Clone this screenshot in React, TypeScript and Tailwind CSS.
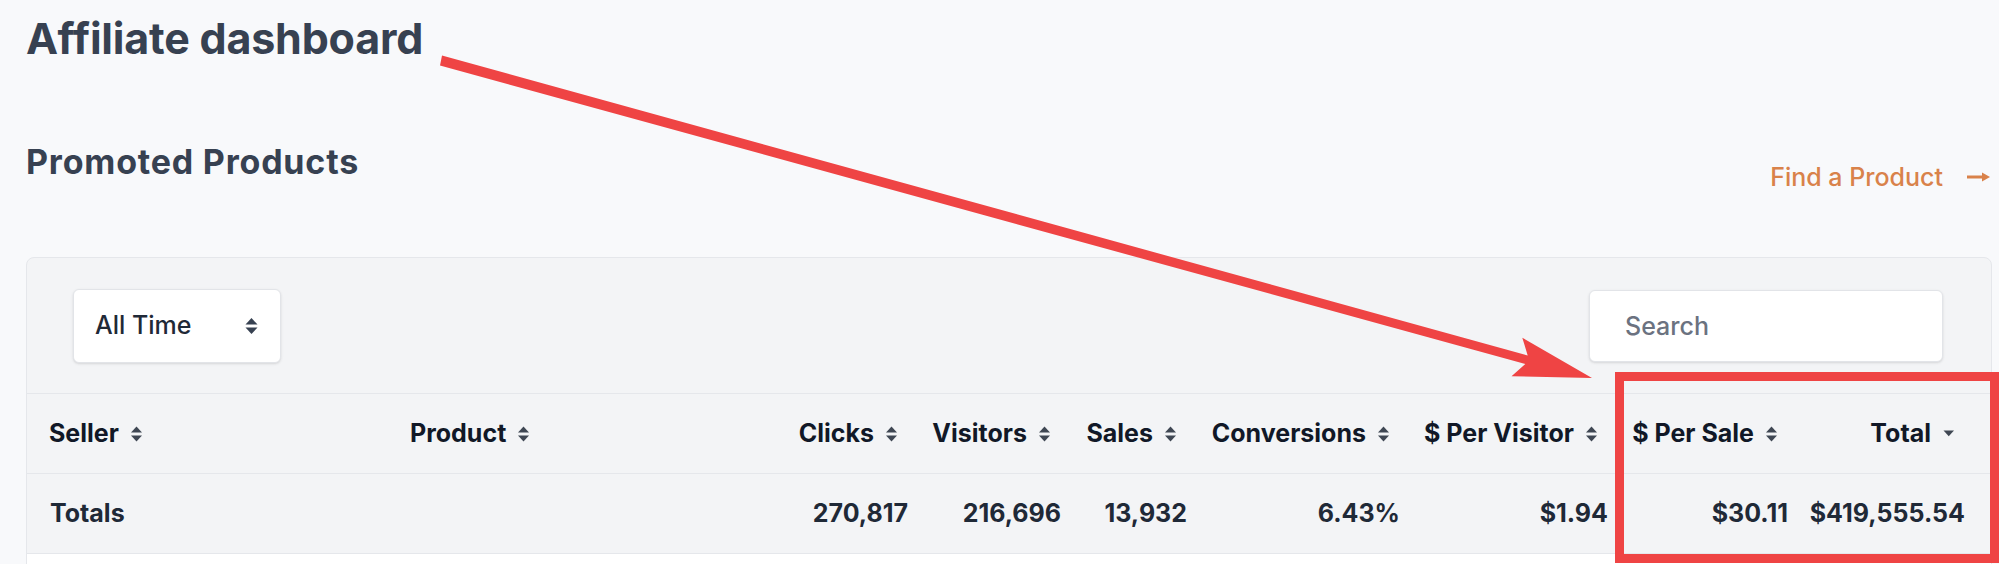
import React from "react";

const SortIcon = () => (
  <svg width="13" height="16" viewBox="0 0 13 16" className="shrink-0">
    <polygon points="1,6.6 6.5,0.6 12,6.6" fill="#3f4753" />
    <polygon points="1,9.4 6.5,15.4 12,9.4" fill="#3f4753" />
  </svg>
);

const CaretDown = () => (
  <svg width="13" height="7" viewBox="0 0 13 7" className="shrink-0">
    <polygon points="1.5,0.5 12,0.5 6.75,6.2" fill="#3f4753" />
  </svg>
);

const SelectIcon = () => (
  <svg width="15" height="18" viewBox="0 0 15 18" className="shrink-0">
    <polygon points="1.5,7.5 7.5,1 13.5,7.5" fill="#374151" />
    <polygon points="1.5,10.5 7.5,17 13.5,10.5" fill="#374151" />
  </svg>
);

const headers: { label: string; align: "left" | "right"; icon: "sort" | "caret" }[] = [
  { label: "Seller", align: "left", icon: "sort" },
  { label: "Product", align: "left", icon: "sort" },
  { label: "Clicks", align: "right", icon: "sort" },
  { label: "Visitors", align: "right", icon: "sort" },
  { label: "Sales", align: "right", icon: "sort" },
  { label: "Conversions", align: "right", icon: "sort" },
  { label: "$ Per Visitor", align: "right", icon: "sort" },
  { label: "$ Per Sale", align: "right", icon: "sort" },
  { label: "Total", align: "right", icon: "caret" },
];

const totals = ["Totals", "", "270,817", "216,696", "13,932", "6.43%", "$1.94", "$30.11", "$419,555.54"];

export default function App() {
  return (
    <div className="relative w-[1999px] h-[564px] overflow-hidden bg-[#f8f9fb] font-['Inter',sans-serif]">
      <div className="pl-[26px] pt-[12px]">
        <h1 className="text-[43px] leading-[53px] font-bold text-[#374151] tracking-[-0.2px]">
          Affiliate dashboard
        </h1>

        <div className="mt-[75px] flex h-[52px] w-[1966px] items-start justify-between pr-[2px]">
          <h2 className="text-[34px] leading-[44px] font-bold tracking-[0.8px] text-[#374151]">Promoted Products</h2>
          <a className="mt-[22px] flex items-center gap-[24px] text-[25px] leading-[30px] font-medium text-[#d9824a]">
            <span>Find a Product</span>
            <svg width="23" height="10" viewBox="0 0 23 10">
              <line x1="0" y1="5" x2="18" y2="5" stroke="#d9824a" strokeWidth="3" />
              <polygon points="15,0.5 23,5 15,9.5" fill="#d9824a" />
            </svg>
          </a>
        </div>

        <div className="mt-[65px] w-[1966px] h-[400px] rounded-lg border border-[#e5e7eb] bg-[#f3f4f6] overflow-hidden">
          <div className="flex h-[136px] items-center justify-between border-b border-[#e5e7eb] pl-[46px] pr-[48px] pt-[1px]">
            <div className="flex h-[74px] w-[208px] items-center justify-between rounded-md border border-[#e2e4e8] bg-white pl-[21px] pr-[21px] shadow-sm">
              <span className="text-[25px] font-medium text-[#1f2937]">All Time</span>
              <SelectIcon />
            </div>
            <input
              placeholder="Search"
              className="h-[72px] w-[354px] rounded-md border border-[#e2e4e8] bg-white pl-[35px] text-[25px] font-medium text-[#1f2937] shadow-sm outline-none placeholder:text-[#6b7280]"
            />
          </div>

          <div className="grid h-[80px] grid-cols-[361px_381px_140px_153px_126px_213px_208px_180px_177px] items-center border-b border-[#e5e7eb] pl-[11px]">
            {headers.map((h) => (
              <div
                key={h.label}
                className={
                  h.align === "left"
                    ? "flex items-center gap-[11px] pl-[11px] text-[25px] font-bold text-[#111827]"
                    : "flex items-center justify-end gap-[11px] pr-[22px] text-[25px] font-bold text-[#111827]"
                }
              >
                <span className="whitespace-nowrap">{h.label}</span>
                {h.icon === "sort" ? <SortIcon /> : <CaretDown />}
              </div>
            ))}
          </div>

          <div className="grid h-[80px] grid-cols-[361px_381px_140px_153px_126px_213px_208px_180px_177px] items-center border-b border-[#e5e7eb] pl-[11px]">
            {totals.map((t, i) => (
              <div
                key={i}
                className={
                  i < 2
                    ? "pl-[12px] text-[25px] font-bold text-[#1f2937]"
                    : "pr-[12px] text-right text-[25px] font-bold text-[#1f2937] whitespace-nowrap"
                }
              >
                {t}
              </div>
            ))}
          </div>

          <div className="h-[200px] bg-white" />
        </div>
      </div>

      <svg
        className="pointer-events-none absolute left-0 top-0"
        width="1999"
        height="564"
        viewBox="0 0 1999 564"
      >
        <polygon
          points="442,55.5 1527.7,355.4 1522.3,337.7 1592,378 1511.5,376.3 1525.3,364 440,65.5"
          fill="#ef4444"
        />
      </svg>
      <div className="pointer-events-none absolute left-[1615px] top-[372px] h-[191px] w-[384px] border-[9px] border-[#ef4444]" />
    </div>
  );
}
